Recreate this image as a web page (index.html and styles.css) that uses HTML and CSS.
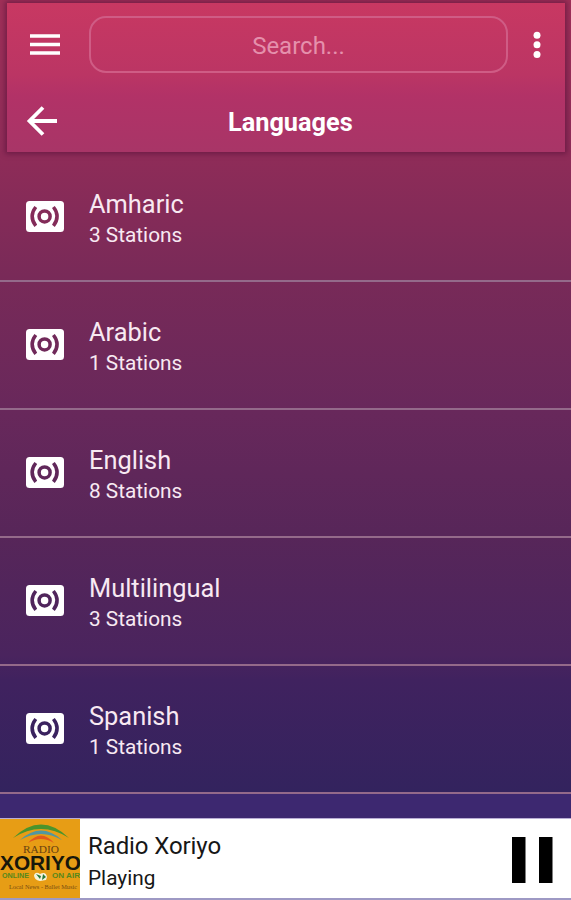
FILE: index.html
```html
<!DOCTYPE html>
<html lang="en">
<head>
<meta charset="utf-8">
<title>Languages</title>
<link rel="stylesheet" href="styles.css">
</head>
<body>
<svg class="defs" width="0" height="0" aria-hidden="true">
  <mask id="speaker-cut" maskUnits="userSpaceOnUse" x="0" y="0" width="38" height="31">
    <rect width="38" height="31" rx="3.5" fill="#fff"/>
    <g fill="none" stroke="#000" stroke-width="3.5">
      <circle cx="18.6" cy="15.4" r="5.5"/>
      <path d="M9.8 6Q2.4 15.4 9.8 24.8M27.4 6Q34.8 15.4 27.4 24.8"/>
    </g>
  </mask>
  <symbol id="speaker" viewBox="0 0 38 31"><rect width="38" height="31" fill="#fff" mask="url(#speaker-cut)"/></symbol>
</svg>
<div class="app">
  <header class="header">
    <div class="toolbar">
      <svg class="menu" width="30" height="22" viewBox="0 0 30 22"><path d="M0 2H30M0 10.5H30M0 19H30" stroke="#fff" stroke-width="3.6"/></svg>
      <div class="search">Search...</div>
      <svg class="more" width="8" height="28" viewBox="0 0 8 28"><g fill="#fff"><circle cx="4" cy="4.2" r="3.5"/><circle cx="4" cy="13.8" r="3.5"/><circle cx="4" cy="23.4" r="3.5"/></g></svg>
    </div>
    <div class="titlebar">
      <svg class="back" width="31" height="30" viewBox="0 0 31 30"><path d="M31 15H3.5M17 1.5L3.5 15L17 28.5" fill="none" stroke="#fff" stroke-width="3.8"/></svg>
      <h1>Languages</h1>
    </div>
  </header>
  <main class="list">
    <div class="row"><svg class="icon"><use href="#speaker"/></svg><div><div class="name">Amharic</div><div class="count">3 Stations</div></div></div>
    <div class="row"><svg class="icon"><use href="#speaker"/></svg><div><div class="name">Arabic</div><div class="count">1 Stations</div></div></div>
    <div class="row"><svg class="icon"><use href="#speaker"/></svg><div><div class="name">English</div><div class="count">8 Stations</div></div></div>
    <div class="row"><svg class="icon"><use href="#speaker"/></svg><div><div class="name">Multilingual</div><div class="count">3 Stations</div></div></div>
    <div class="row"><svg class="icon"><use href="#speaker"/></svg><div><div class="name">Spanish</div><div class="count">1 Stations</div></div></div>
  </main>
  <div class="strip"></div>
  <footer class="player">
    <svg class="cover" width="80" height="79" viewBox="0 0 80 79">
      <rect width="80" height="79" fill="#e79d15"/>
      <path d="M13 19Q41 -8 69 19Q41 1 13 19Z" fill="#4b942c"/>
      <path d="M20 21Q41 2 62 21Q41 9 20 21Z" fill="#5297a0"/>
      <path d="M28 24Q41 9 54 24Q41 16 28 24Z" fill="#e2591c"/>
      <text x="23" y="34" class="logo-radio" textLength="36" lengthAdjust="spacingAndGlyphs">RADIO</text>
      <text x="0" y="50.5" class="logo-name" textLength="81" lengthAdjust="spacingAndGlyphs">XORIYO</text>
      <text x="2" y="59" class="logo-air" textLength="27" lengthAdjust="spacingAndGlyphs">ONLINE</text>
      <text x="52" y="59" class="logo-air" textLength="28" lengthAdjust="spacingAndGlyphs">ON AIR</text>
      <path d="M34 56Q36 52 40 55Q46 52 47 58L46 61L40 62Q34 61 34 56Z" fill="#f5f3dd"/>
      <path d="M36 55L41 57L40 60ZM43 55L46 58L42 61Z" fill="#26783a"/>
      <text x="9" y="70" class="logo-tag" textLength="68" lengthAdjust="spacingAndGlyphs">Local News - Ballet Music</text>
    </svg>
    <div class="track"><div class="station">Radio Xoriyo</div><div class="state">Playing</div></div>
    <svg class="pause" width="41" height="46" viewBox="0 0 41 46"><path d="M0 0H13.5V46H0ZM27 0H40.5V46H27Z"/></svg>
  </footer>
</div>
</body>
</html>
```
FILE: styles.css
```css
* { box-sizing: border-box; }
body { margin: 0; font-family: Roboto, "Liberation Sans", sans-serif; color: #fff; }
.defs { position: absolute; }
.app {
  width: 571px;
  height: 900px;
  display: flex;
  flex-direction: column;
  overflow: hidden;
  background: linear-gradient(#a03058 0, #8f2c58 153px, #782a58 280px, #68285b 410px, #572659 535px, #4a245e 655px, #40225f 680px, #33235e 792px);
}
.header {
  height: 149px;
  margin: 3px 6px 2px 7px;
  background: linear-gradient(#c83862, #bb3564 48%, #b23267 62%, #a83567);
  box-shadow: 0 0 5px 2px rgba(75, 12, 52, .5);
}
.toolbar { display: flex; align-items: flex-start; height: 87px; padding-top: 13px; }
.menu { margin: 18px 29px 0 23px; }
.search {
  width: 419px;
  height: 57px;
  border: 2px solid #cf5c85;
  border-radius: 17px;
  line-height: 56px;
  text-align: center;
  font-size: 24px;
  color: #e590ac;
}
.more { margin: 15px 0 0 25px; }
.titlebar { display: flex; align-items: center; height: 62px; padding-left: 19px; }
h1 { margin: 3px 0 0 171px; font-size: 25.3px; line-height: 30px; font-weight: 700; }
.row {
  display: flex;
  height: 128px;
  padding: 34px 0 0 26px;
  border-bottom: 2px solid #946a8a;
}
.icon { width: 38px; height: 31px; margin: 13px 25px 0 0; }
.name { font-size: 25.4px; line-height: 32px; color: #f8e9f2; }
.count { font-size: 20.8px; line-height: 31px; color: #f8e9f2; }
.strip { height: 24px; background: #3d2870; }
.player {
  display: flex;
  height: 82px;
  background: #fff;
  color: #171717;
  border-top: 1px solid #b9aed5;
  border-bottom: 2px solid #9e99c4;
}
.track { width: 423px; padding: 12px 0 0 8px; }
.station { font-size: 24px; letter-spacing: -.1px; line-height: 31px; }
.state { font-size: 20.8px; line-height: 32px; }
.pause { margin: 18px 0 0 9px; }
.logo-radio { font: 10.5px "Liberation Serif", serif; fill: #684111; }
.logo-name { font: 700 21px "Liberation Sans", sans-serif; fill: #17170b; }
.logo-air { font: 700 8px "Liberation Sans", sans-serif; fill: #56881d; }
.logo-tag { font: 6px "Liberation Serif", serif; fill: #784d12; }
```
